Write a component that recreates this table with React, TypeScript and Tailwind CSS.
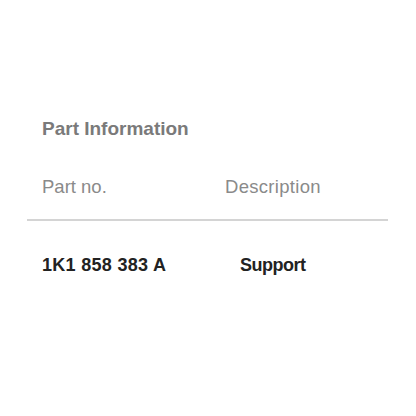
export default function App() {
  return (
    <div
      className="w-[416px] h-[416px] bg-white pt-[119px] pl-[27px]"
      style={{ fontFamily: '"Liberation Sans", Arial, sans-serif' }}
    >
      <div className="w-[361px]">
        <h2 className="pl-[15px] text-[19px] leading-[20px] font-bold text-[#7a7a7a]">Part Information</h2>
        <div className="mt-[38px] grid grid-cols-[183px_1fr] pl-[15px] text-[18.5px] leading-[20px] text-[#8a8a8a]">
          <span>Part no.</span>
          <span className="tracking-[0.3px]">Description</span>
        </div>
        <div className="mt-[22px] h-[2px] bg-[#d4d4d4]" />
        <div className="mt-[34px] grid grid-cols-[198px_1fr] pl-[15px] text-[18px] leading-[20px] font-bold text-[#222222]">
          <span className="tracking-[0.3px]">1K1 858 383 A</span>
          <span className="tracking-[-0.5px]">Support</span>
        </div>
      </div>
    </div>
  );
}
